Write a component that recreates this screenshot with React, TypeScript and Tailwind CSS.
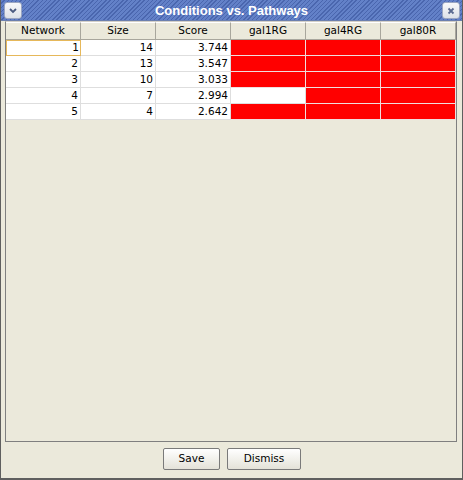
import React from "react";

const rows = [
  { n: 1, s: 14, sc: "3.744", c: [true, true, true] },
  { n: 2, s: 13, sc: "3.547", c: [true, true, true] },
  { n: 3, s: 10, sc: "3.033", c: [true, true, true] },
  { n: 4, s: 7, sc: "2.994", c: [false, true, true] },
  { n: 5, s: 4, sc: "2.642", c: [true, true, true] },
];

const headers = ["Network", "Size", "Score", "gal1RG", "gal4RG", "gal80R"];

export default function App() {
  return (
    <div
      className="w-[463px] h-[480px] bg-[#ebe9db] flex flex-col border-x border-b-2 border-[#5f5f5f] text-[10.5px] text-black"
      style={{ fontFamily: '"DejaVu Sans", Tahoma, sans-serif' }}
    >
      {/* Title bar */}
      <div className="h-[21px] flex items-start justify-between pt-[2px] pl-[3px] pr-[2px] border-b border-[#6b7fae] bg-[repeating-linear-gradient(135deg,#6381c8_0px,#6381c8_2px,#4a66ae_2px,#4a66ae_3px)] relative">
        <div className="w-[18px] h-[17px] rounded-[3px] border border-[#9aa6c2] bg-[linear-gradient(#f7f8fa,#dde1e8)] flex items-center justify-center relative z-10">
          <svg width="10" height="8" viewBox="0 0 10 8">
            <path d="M2 2 L5 5 L8 2" fill="none" stroke="#4a5a80" strokeWidth="1.8" />
          </svg>
        </div>
        <div
          className="absolute inset-0 flex items-center justify-center text-white font-bold text-[13px] pt-[1px]"
          style={{ fontFamily: '"Liberation Sans", Arial, sans-serif' }}
        >
          Conditions vs. Pathways
        </div>
        <div className="w-[18px] h-[17px] rounded-[3px] border border-[#9aa6c2] bg-[linear-gradient(#f7f8fa,#dde1e8)] flex items-center justify-center relative z-10">
          <svg width="10" height="10" viewBox="0 0 10 10">
            <path d="M2.5 2.5 L7.5 7.5 M7.5 2.5 L2.5 7.5" fill="none" stroke="#5a6a90" strokeWidth="1.8" />
          </svg>
        </div>
      </div>

      {/* Scroll pane */}
      <div className="ml-[4px] mr-[5px] h-[421px] border border-[#7f7f7f] border-t-[#d4d0c8] bg-[#ebe9db] flex flex-col">
        {/* Header */}
        <div className="flex h-[18px] border-b border-[#a8a69c]">
          {headers.map((h) => (
            <div
              key={h}
              className="w-[75px] flex items-center justify-center bg-[#ebe9db] border-r border-[#a8a69c] border-t border-t-white"
            >
              {h}
            </div>
          ))}
        </div>
        {rows.map((r, ri) => (
          <div key={r.n} className="flex h-[16px]">
            <div
              className={
                ri === 0
                  ? "w-[75px] bg-white border border-[#e6b85a] flex items-center justify-end pr-[1px]"
                  : "w-[75px] bg-white border-r border-b border-[#dedede] flex items-center justify-end pr-[2px]"
              }
            >
              {r.n}
            </div>
            <div className="w-[75px] bg-white border-r border-b border-[#dedede] flex items-center justify-end pr-[2px]">
              {r.s}
            </div>
            <div className="w-[75px] bg-white border-r border-b border-[#dedede] flex items-center justify-end pr-[2px]">
              {r.sc}
            </div>
            {r.c.map((c, ci) => (
              <div
                key={ci}
                className={
                  c
                    ? "w-[75px] bg-[#ff0000] border-r border-b border-[#f0dede]"
                    : "w-[75px] bg-white border-r border-b border-[#dedede]"
                }
              />
            ))}
          </div>
        ))}
      </div>

      {/* Buttons */}
      <div className="flex-1 flex items-start justify-center gap-[7px] pt-[6px] pl-[1px]">
        <button className="w-[57px] h-[22px] border border-[#7a7a7a] rounded-[2px] bg-[linear-gradient(#ffffff,#e4e2d8)] text-[10.5px] flex items-center justify-center">
          Save
        </button>
        <button className="w-[74px] h-[22px] border border-[#7a7a7a] rounded-[2px] bg-[linear-gradient(#ffffff,#e4e2d8)] text-[10.5px] flex items-center justify-center">
          Dismiss
        </button>
      </div>
    </div>
  );
}
